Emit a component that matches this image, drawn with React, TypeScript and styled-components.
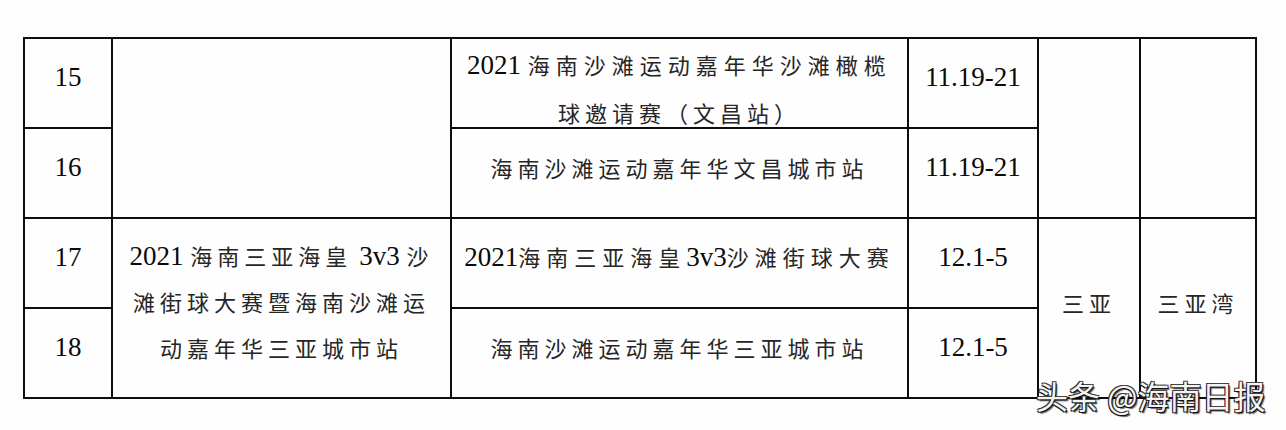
import React from "react";
import styled, { createGlobalStyle } from "styled-components";

const GlobalStyle = createGlobalStyle`
  html, body {
    margin: 0;
    padding: 0;
    background: #fdfdfd;
  }
`;

const Page = styled.div`
  position: relative;
  width: 1286px;
  height: 430px;
  padding: 37px 0 0 23px;
  box-sizing: border-box;
  overflow: hidden;
  background: #fdfdfd;
`;

const Table = styled.div`
  display: grid;
  grid-template-columns: 86px 337px 455px 128px 100px 114px;
  grid-template-rows: repeat(4, 88px);
  gap: 2px;
  padding: 2px;
  width: max-content;
  background: #0d0d0d;
`;

type Nudge = "up" | "down";

const Cell = styled.div<{ $col: number; $row: number; $span?: number; $nudge?: Nudge; $lh?: number }>`
  grid-column: ${(p) => p.$col};
  grid-row: ${(p) => p.$row} / span ${(p) => p.$span ?? 1};
  display: flex;
  align-items: center;
  justify-content: center;
  flex-direction: column;
  box-sizing: border-box;
  padding-top: ${(p) => (p.$nudge === "down" ? "11px" : "0")};
  padding-bottom: ${(p) => (p.$nudge === "up" ? "12px" : "0")};
  background: #fefefe;
  color: #0a0a0a;
  font-family: "Liberation Serif", "Noto Sans CJK SC", serif;
  font-size: 27px;
  line-height: ${(p) => p.$lh ?? 45}px;
  text-align: center;
  white-space: nowrap;
`;

const Line = styled.div`
  display: block;
`;

const Han = styled.span<{ $spacing?: number }>`
  font-family: "Noto Sans CJK SC", sans-serif;
  font-size: 22px;
  letter-spacing: ${(p) => p.$spacing ?? 5}px;
  color: #262626;
`;

const Watermark = styled.div`
  position: absolute;
  left: 1036px;
  top: 379px;
  font-family: "Noto Sans CJK SC", sans-serif;
  font-size: 32px;
  line-height: 1;
  color: #f4f4f4;
  text-shadow:
    1px 1px 0 #111,
    -1px 1px 0 #222,
    1px -1px 0 #444,
    -1px -1px 0 #333,
    2px 2px 1px rgba(0, 0, 0, 0.6);
  white-space: nowrap;
`;

export default function App() {
  return (
    <>
      <GlobalStyle />
      <Page>
        <Table>
          <Cell $col={1} $row={1} $nudge="up">15</Cell>
          <Cell $col={2} $row={1} $span={2} />
          <Cell $col={3} $row={1} $nudge="down" $lh={47}>
            <Line>
              2021 <Han $spacing={6}>海南沙滩运动嘉年华沙滩橄榄</Han>
            </Line>
            <Line>
              <Han>球邀请赛（文昌站）</Han>
            </Line>
          </Cell>
          <Cell $col={4} $row={1} $nudge="up">11.19-21</Cell>
          <Cell $col={5} $row={1} $span={2} />
          <Cell $col={6} $row={1} $span={2} />

          <Cell $col={1} $row={2} $nudge="up">16</Cell>
          <Cell $col={3} $row={2} $nudge="up">
            <Han>海南沙滩运动嘉年华文昌城市站</Han>
          </Cell>
          <Cell $col={4} $row={2} $nudge="up">11.19-21</Cell>

          <Cell $col={1} $row={3} $nudge="up">17</Cell>
          <Cell $col={2} $row={3} $span={2} $nudge="up">
            <Line>
              2021 <Han>海南三亚海皇</Han> 3v3 <Han>沙</Han>
            </Line>
            <Line>
              <Han>滩街球大赛暨海南沙滩运</Han>
            </Line>
            <Line>
              <Han>动嘉年华三亚城市站</Han>
            </Line>
          </Cell>
          <Cell $col={3} $row={3} $nudge="up">
            <Line>
              2021<Han $spacing={6}>海南三亚海皇</Han>3v3<Han $spacing={6}>沙滩街球大赛</Han>
            </Line>
          </Cell>
          <Cell $col={4} $row={3} $nudge="up">12.1-5</Cell>
          <Cell $col={5} $row={3} $span={2} $nudge="up">
            <Han>三亚</Han>
          </Cell>
          <Cell $col={6} $row={3} $span={2} $nudge="up">
            <Han>三亚湾</Han>
          </Cell>

          <Cell $col={1} $row={4} $nudge="up">18</Cell>
          <Cell $col={3} $row={4} $nudge="up">
            <Han>海南沙滩运动嘉年华三亚城市站</Han>
          </Cell>
          <Cell $col={4} $row={4} $nudge="up">12.1-5</Cell>
        </Table>
        <Watermark>头条 @海南日报</Watermark>
      </Page>
    </>
  );
}
